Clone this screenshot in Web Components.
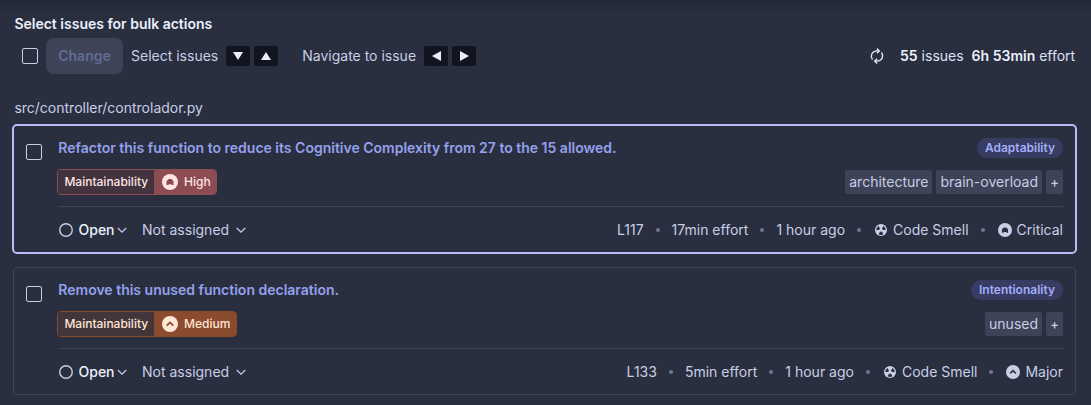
<!DOCTYPE html>
<html lang="en">
<head>
<meta charset="utf-8">
<title>Issues</title>
<style>
html,body{margin:0;height:405px;overflow:hidden;background:#2a2f40}
body{font:14px/20px Inter,"Liberation Sans",sans-serif;color:#c8cee6}
</style>
</head>
<body>
<issues-page></issues-page>
<script>
const define = (name, markup, setup) => {
  const template = document.createElement('template');
  template.innerHTML = '<style>*{box-sizing:border-box}:host{box-sizing:border-box}</style>' + markup;
  customElements.define(name, class extends HTMLElement {
    connectedCallback() {
      if (this.shadowRoot) return;
      const root = this.attachShadow({mode: 'open'});
      root.append(template.content.cloneNode(true));
      if (setup) setup(root, this);
    }
  });
};

const icons = {
  refresh: [16, '<g fill="none" stroke="currentColor" stroke-width="1.4"><path d="M3.5 11.5C1 8 2.600 3.200 8 2.900H10.200M7.900 .6l2.400 2.300-2.400 2.300"/><path d="M12.500 4.500C15 8 13.400 12.800 8 13.100H5.800M8.100 15.400l-2.400-2.300 2.400-2.300"/></g>'],
  down: [10, '<path fill="none" stroke="currentColor" stroke-width="1.200" d="M.8 3l4.200 4.200L9.200 3"/>'],
  open: [14, '<circle cx="7" cy="7" r="6.250" fill="none" stroke="currentColor" stroke-width="1.400"/>'],
  high: [16, '<circle cx="8" cy="8" r="8" fill="currentColor"/><path fill="var(--hole,#2a2f40)" d="M6.800 5H9.200L11.500 7V11H9.500V10.200H6.500V11H4.500V7z"/>'],
  medium: [16, '<circle cx="8" cy="8" r="8" fill="currentColor"/><path fill="none" stroke="var(--hole,#2a2f40)" stroke-width="1.700" d="M4.700 9.600 8 6.400l3.300 3.200"/>'],
  smell: [12, '<circle cx="6" cy="6" r="6" fill="currentColor"/><g fill="#2a2f40"><path d="M1.200 5.900A4.800 4.800 0 0 1 3.500 1.900L5 4.600A1.700 1.700 0 0 0 4.300 5.900z"/><path d="M10.800 5.900A4.800 4.800 0 0 0 8.500 1.900L7 4.600A1.700 1.700 0 0 1 7.700 5.900z"/><path d="M3.600 10.200A4.800 4.800 0 0 0 8.400 10.200L6.900 7.500A1.700 1.700 0 0 1 5.100 7.500z"/></g><circle cx="6" cy="6" r="1" fill="currentColor"/>']
};
define('ui-icon', '<style>:host{display:block;flex:none}svg{display:block;width:100%;height:100%}</style>', (root, el) => {
  const [size, body] = icons[el.getAttribute('name')];
  const px = (el.getAttribute('size') || size) + 'px';
  el.style.width = el.style.height = px;
  root.innerHTML += `<svg viewBox="0 0 ${size} ${size}">${body}</svg>`;
});
define('check-box', '<style>:host{display:block;flex:none;width:16px;height:16px;border:1px solid #c8cee6;border-radius:2px}</style>');
const arrows = {down: 'M0 0h10L5 8z', up: 'M0 8h10L5 0z', left: 'M9 0v10L0 5z', right: 'M0 0v10L9 5z'};
define('key-hint', '<style>:host{display:flex;align-items:center;justify-content:center;width:24px;height:20px;border-radius:2px;background:#12151f;color:#ebeffa}svg{display:block}</style>', (root, el) => {
  const dir = el.getAttribute('dir-to'), flat = dir === 'down' || dir === 'up', w = flat ? 10 : 9, h = flat ? 8 : 10;
  root.innerHTML += `<svg width="${w}" height="${h}" viewBox="0 0 ${w} ${h}"><path fill="currentColor" d="${arrows[dir]}"/></svg>`;
});
define('bulk-bar', `<style>
:host{display:flex;align-items:center;height:36px;padding:0 15.8px 0 22px}
button{width:77px;height:36px;margin:0 8px;padding:0;border:0;border-radius:8px;background:#3e4357;color:#616c94;font:600 14px/20px Inter,sans-serif}
key-hint{margin-left:4px}key-hint.first{margin-left:8px}
.nav{margin-left:24px}.total{margin-left:auto;display:flex;align-items:center;color:#dde2f2}
ui-icon{margin-right:15px}.effort{margin-left:8px}b{font-weight:600;color:#ebeffa}
</style>
<check-box></check-box><button disabled>Change</button>
<span>Select issues</span><key-hint class="first" dir-to="down"></key-hint><key-hint dir-to="up"></key-hint>
<span class="nav">Navigate to issue</span><key-hint class="first" dir-to="left"></key-hint><key-hint dir-to="right"></key-hint>
<div class="total"><ui-icon name="refresh"></ui-icon><span><b>55</b> issues</span><span class="effort"><b>6h 53min</b> effort</span></div>`);
define('quality-pill', `<style>
:host{display:flex;width:max-content;height:26px;border:1px solid var(--line);border-radius:4px;overflow:hidden;font-size:12px;line-height:24px;font-weight:500;color:var(--ink)}
:host([level=high]){--line:#8c4c52;--soft:#43333f;--solid:#8c4c52;--ink:#fee4e2}
:host([level=medium]){--line:#8a4a2c;--soft:#43353a;--solid:#8b4b2e;--ink:#ffe6d5}
.q{padding:0 5.600px 0 6.400px;background:var(--soft)}
.s{display:flex;align-items:center;gap:6.300px;padding:0 5.700px 0 8px;background:var(--solid);--hole:var(--solid)}
</style><span class="q"><slot></slot></span><span class="s"></span>`, (root, el) => {
  const level = el.getAttribute('level');
  root.querySelector('.s').innerHTML = `<ui-icon name="${level}"></ui-icon><span>${level === 'high' ? 'High' : 'Medium'}</span>`;
});
define('tag-chip', '<style>:host{display:block;height:24px;padding:0 4px;border-radius:2px;background:#3e4357;line-height:24px}:host([more]){width:17px;padding:0;text-align:center;font-size:13px;font-weight:500}</style><slot></slot>');
define('issue-card', `<style>
:host{display:flex;height:128px;margin:0 15px 14px 13px;border:1px solid #3e4357;border-radius:4px;padding:12px 12px 0}
:host([selected]){outline:2px solid #b6befa;outline-offset:-1px;border-color:transparent}
check-box{margin-top:6px}.body{flex:1;margin-left:16px}
.row{display:flex;align-items:center;justify-content:space-between}
.head{height:20px}.title{font-weight:600;color:#93a0ec;padding-left:.3px}
.cat{height:20px;padding:0 8px;border-radius:10px;background:#373c62;color:#a3adf8;font-size:12px;font-weight:600}
.mid{height:26px;margin-top:11px}::slotted(quality-pill){margin-left:-1px}.tags{display:flex;gap:4px}
.foot{height:47px;margin-top:11px;border-top:1px solid #3e4357}
.actions,.meta,.pair{display:flex;align-items:center}
.actions{padding-left:1px}
.open{font-weight:500;color:#ebeffa;margin:0 2.500px 0 5.500px}.assign{margin:0 6.500px 0 15px}
.dot{width:4px;height:4px;border-radius:50%;background:#6f7898;margin:0 12px}
.sev{gap:5px;padding-left:1px}.smell{gap:6px;padding-left:2px}
</style>
<check-box></check-box><div class="body">
<div class="row head"><span class="title"><slot></slot></span><span class="cat"></span></div>
<div class="row mid"><slot name="quality"></slot><div class="tags"><slot name="tag"></slot><tag-chip more>+</tag-chip></div></div>
<div class="row foot"><div class="actions"><ui-icon name="open"></ui-icon><span class="open">Open</span><ui-icon name="down"></ui-icon><span class="assign">Not assigned</span><ui-icon name="down"></ui-icon></div>
<div class="meta"><span class="line"></span><i class="dot"></i><span class="effort"></span><i class="dot"></i><span>1 hour ago</span><i class="dot"></i><span class="pair smell"><ui-icon name="smell"></ui-icon><span>Code Smell</span></span><i class="dot"></i><span class="pair sev"></span></div></div>
</div>`, (root, el) => {
  const g = n => el.getAttribute(n);
  root.querySelector('.cat').textContent = g('category');
  root.querySelector('.line').textContent = g('line');
  root.querySelector('.effort').textContent = g('effort');
  root.querySelector('.sev').innerHTML = `<ui-icon name="${g('icon')}" size="14"></ui-icon><span>${g('severity')}</span>`;
});
define('issues-page', `<style>
:host{display:block;padding-top:14px;height:405px;background:linear-gradient(#242936,#2a2f40 14px)}
.title{padding-left:14.4px;font-weight:600;color:#ebeffa;height:24px}
.path{padding:24px 0 0 14.4px;height:51px}
</style>
<div class="title">Select issues for bulk actions</div>
<bulk-bar></bulk-bar>
<div class="path">src/controller/controlador.py</div>
<issue-card selected category="Adaptability" line="L117" effort="17min effort" severity="Critical" icon="high">Refactor this function to reduce its Cognitive Complexity from 27 to the 15 allowed.<quality-pill slot="quality" level="high">Maintainability</quality-pill><tag-chip slot="tag">architecture</tag-chip><tag-chip slot="tag">brain-overload</tag-chip></issue-card>
<issue-card category="Intentionality" line="L133" effort="5min effort" severity="Major" icon="medium">Remove this unused function declaration.<quality-pill slot="quality" level="medium">Maintainability</quality-pill><tag-chip slot="tag">unused</tag-chip></issue-card>`);
</script>
</body>
</html>
